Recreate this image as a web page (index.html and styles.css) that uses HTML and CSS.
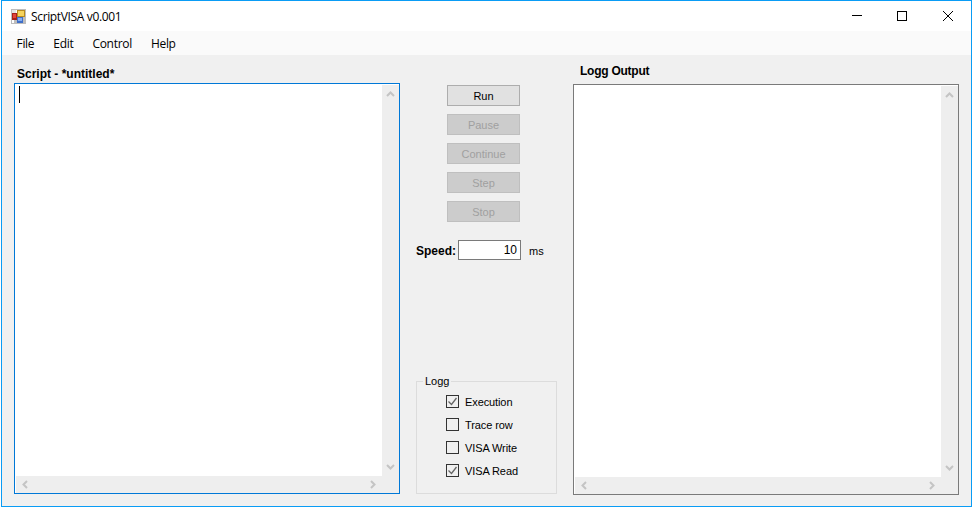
FILE: index.html
```html
<!DOCTYPE html>
<html lang="en">
<head>
<meta charset="utf-8">
<title>ScriptVISA v0.001</title>
<link rel="stylesheet" href="styles.css">
</head>
<body>
<div class="window">
  <header class="titlebar">
    <svg class="app-icon" width="15" height="15" viewBox="0 0 15 15">
      <rect x="0" y="0" width="15" height="15" fill="#bdbdbd"/>
      <rect x="1" y="11" width="2" height="3" fill="#fff"/>
      <rect x="5" y="1" width="1" height="3" fill="#fff"/>
      <rect x="1" y="1" width="4" height="3" fill="#e4e4e4"/>
      <rect x="1" y="4" width="5" height="7" fill="#a8201a"/>
      <rect x="2" y="5" width="3" height="4" fill="#e2453a"/>
      <rect x="6" y="1" width="8" height="7" fill="#b88a1e"/>
      <rect x="7" y="2" width="6" height="5" fill="#f6d35c"/>
      <rect x="6" y="8" width="6" height="6" fill="#3f6fc9"/>
      <rect x="7" y="9" width="4" height="3" fill="#86aef0"/>
    </svg>
    <span class="title-text">ScriptVISA v0.001</span>
    <div class="caption">
      <span class="cap-btn"><svg width="12" height="12" viewBox="0 0 12 12"><path d="M1 5.500h10" stroke="#000" fill="none"/></svg></span>
      <span class="cap-btn"><svg width="12" height="12" viewBox="0 0 12 12"><rect x="1.500" y="1.500" width="9" height="9" stroke="#000" fill="none"/></svg></span>
      <span class="cap-btn cap-close"><svg width="12" height="12" viewBox="0 0 12 12"><path d="M1 1l10 10M11 1L1 11" stroke="#000" fill="none"/></svg></span>
    </div>
  </header>
  <nav class="menubar">
    <span class="menu-item">File</span>
    <span class="menu-item">Edit</span>
    <span class="menu-item">Control</span>
    <span class="menu-item">Help</span>
  </nav>
  <main class="content">
    <section class="pane pane-script">
      <h2 class="pane-label">Script - *untitled*</h2>
      <div class="textbox textbox-focus">
        <div class="text-row">
          <div class="text-area"><span class="caret"></span></div>
          <div class="scroll-v">
            <svg class="arrow" width="9" height="6" viewBox="0 0 9 6"><path d="M1 5l3.500-3.500L8 5" stroke="#c4c4c4" stroke-width="2" fill="none"/></svg>
            <svg class="arrow" width="9" height="6" viewBox="0 0 9 6"><path d="M1 1l3.500 3.500L8 1" stroke="#c4c4c4" stroke-width="2" fill="none"/></svg>
          </div>
        </div>
        <div class="scroll-h">
          <svg class="arrow" width="6" height="9" viewBox="0 0 6 9"><path d="M5 1L1.500 4.500 5 8" stroke="#c4c4c4" stroke-width="2" fill="none"/></svg>
          <svg class="arrow" width="6" height="9" viewBox="0 0 6 9"><path d="M1 1l3.500 3.500L1 8" stroke="#c4c4c4" stroke-width="2" fill="none"/></svg>
        </div>
      </div>
    </section>

    <section class="controls">
      <div class="buttons">
        <button class="btn" type="button">Run</button>
        <button class="btn btn-off" type="button">Pause</button>
        <button class="btn btn-off" type="button">Continue</button>
        <button class="btn btn-off" type="button">Step</button>
        <button class="btn btn-off" type="button">Stop</button>
      </div>
      <div class="speed">
        <span class="speed-label">Speed:</span>
        <span class="speed-input">10</span>
        <span class="speed-unit">ms</span>
      </div>
      <fieldset class="logg">
        <legend class="logg-legend">Logg</legend>
        <div class="check"><span class="box"><svg width="11" height="11" viewBox="0 0 11 11"><path d="M1.500 5.500l3 3 5-6.500" stroke="#666" stroke-width="1.300" fill="none"/></svg></span>Execution</div>
        <div class="check"><span class="box"></span>Trace row</div>
        <div class="check"><span class="box"></span>VISA Write</div>
        <div class="check"><span class="box"><svg width="11" height="11" viewBox="0 0 11 11"><path d="M1.500 5.500l3 3 5-6.500" stroke="#666" stroke-width="1.300" fill="none"/></svg></span>VISA Read</div>
      </fieldset>
    </section>

    <section class="pane pane-log">
      <h2 class="pane-label pane-label-log">Logg Output</h2>
      <div class="textbox">
        <div class="text-row">
          <div class="text-area"></div>
          <div class="scroll-v">
            <svg class="arrow" width="9" height="6" viewBox="0 0 9 6"><path d="M1 5l3.500-3.500L8 5" stroke="#c4c4c4" stroke-width="2" fill="none"/></svg>
            <svg class="arrow" width="9" height="6" viewBox="0 0 9 6"><path d="M1 1l3.500 3.500L8 1" stroke="#c4c4c4" stroke-width="2" fill="none"/></svg>
          </div>
        </div>
        <div class="scroll-h">
          <svg class="arrow" width="6" height="9" viewBox="0 0 6 9"><path d="M5 1L1.500 4.500 5 8" stroke="#c4c4c4" stroke-width="2" fill="none"/></svg>
          <svg class="arrow" width="6" height="9" viewBox="0 0 6 9"><path d="M1 1l3.500 3.500L1 8" stroke="#c4c4c4" stroke-width="2" fill="none"/></svg>
        </div>
      </div>
    </section>
  </main>
</div>
</body>
</html>
```

FILE: styles.css
```css
* { box-sizing: border-box; }
html, body { margin: 0; height: 100%; overflow: hidden; }
body { font-family: "Liberation Sans", sans-serif; font-size: 11px; color: #000; background: #fff; }
.window { width: 971px; height: 507px; margin-left: 1px; border: 1px solid #0a9cf5; display: flex; flex-direction: column; background: #f0f0f0; }
.titlebar { height: 30px; background: #fff; display: flex; align-items: center; padding: 0 1px 0 9px; flex: none; }
.app-icon { flex: none; }
.title-text { margin-left: 5px; font-family: "Open Sans", sans-serif; font-size: 12px; letter-spacing: -0.35px; }
.caption { margin-left: auto; display: flex; }
.cap-btn { width: 45px; height: 30px; display: flex; align-items: center; justify-content: center; }
.cap-close { width: 46px; padding-left: 1px; }
.menubar { height: 24px; background: #fafafa; display: flex; align-items: center; padding-left: 5px; flex: none; font-family: "Open Sans", sans-serif; }
.menu-item { padding: 0 9.500px; font-size: 12px; letter-spacing: -0.3px; }
.content { flex: 1; display: flex; align-items: stretch; min-height: 0; }
.pane { display: flex; flex-direction: column; flex: none; width: 386px; }
.pane-script { margin-left: 12px; }
.pane-label { margin: 0; height: 28px; font-size: 12px; font-weight: 700; padding: 11px 0 0 3px; line-height: 16px; }
.pane-label-log { height: 29px; padding: 8px 0 0 7px; letter-spacing: -0.25px; }
.textbox { width: 386px; height: 411px; border: 1px solid #7a7a7a; padding: 1px 0 0 1px; background: #fff; display: flex; flex-direction: column; }
.textbox-focus { border-color: #0078d7; }
.text-row { flex: 1; display: flex; min-height: 0; }
.text-area { flex: 1; padding: 1px 0 0 3px; }
.caret { display: block; width: 1px; height: 17px; background: #000; }
.scroll-v { width: 17px; background: #eee; display: flex; flex-direction: column; align-items: center; justify-content: space-between; padding: 6px 1px 6px 0; }
.scroll-h { height: 17px; background: #eee; display: flex; align-items: center; justify-content: space-between; padding: 0 23px 1px 6px; }
.arrow { display: block; flex: none; }
.controls { width: 173px; flex: none; display: flex; flex-direction: column; align-items: flex-start; padding-left: 16px; }
.buttons { display: flex; flex-direction: column; gap: 8px; margin-top: 30px; margin-left: 31px; }
.btn { width: 73px; height: 21px; padding: 0; border: 1px solid #adadad; background: #e1e1e1; font: inherit; color: #000; }
.btn-off { background: #cccccc; border-color: #bfbfbf; color: #a0a0a0; }
.speed { display: flex; align-items: center; margin-top: 18px; height: 20px; }
.speed-label { font-weight: 700; font-size: 12px; width: 42px; flex: none; padding-top: 1px; }
.speed-input { width: 63px; height: 20px; border: 1px solid #7a7a7a; background: #fff; text-align: right; padding-right: 3px; line-height: 18px; font-size: 12px; }
.speed-unit { margin-left: 8px; padding-top: 1px; }
.logg { width: 141px; height: 119px; margin: auto 0 12px; padding: 3px 0 0; border: 1px solid #dcdcdc; }
.logg-legend { margin-left: 6px; padding: 0 2px; line-height: 12px; }
.check { height: 23px; display: flex; align-items: center; padding-left: 29px; letter-spacing: -0.1px; }
.box { width: 13px; height: 13px; border: 1px solid #333; background: #f0f0f0; margin-right: 6px; display: block; flex: none; }
.box svg { display: block; }
```
